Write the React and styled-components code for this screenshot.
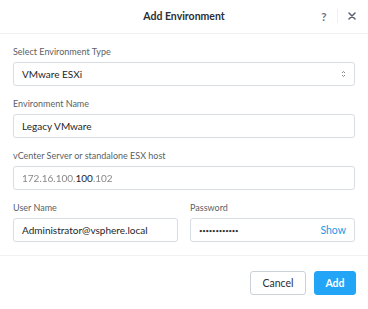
import React from "react";
import styled, { createGlobalStyle } from "styled-components";

const Global = createGlobalStyle`
  html, body { margin: 0; padding: 0; background: #fff; }
  body { font-family: Lato, "Noto Sans", sans-serif; color: #333; }
  * { box-sizing: border-box; }
`;

const Dialog = styled.div`
  width: 368px;
  height: 309px;
  background: #fff;
  display: flex;
  flex-direction: column;
`;

const Header = styled.div`
  height: 34px;
  border-bottom: 1px solid #f0f1f3;
  position: relative;
  display: flex;
  align-items: center;
  justify-content: center;
`;

const Title = styled.div`
  font-size: 10.5px;
  font-weight: 700;
  color: #2b2e33;
  margin-top: -2px;
`;

const HeaderActions = styled.div`
  position: absolute;
  right: 12px;
  top: 0;
  height: 32px;
  display: flex;
  align-items: center;
`;

const Help = styled.span`
  font-size: 11.5px;
  font-weight: 700;
  color: #6a7280;
  width: 10px;
  text-align: center;
`;

const Divider = styled.span`
  width: 1px;
  height: 14px;
  background: #eef0f3;
  margin: 0 10px 0 8px;
`;

const Body = styled.div`
  padding: 12px 13px 13px 13px;
  display: flex;
  flex-direction: column;
  gap: 12px;
  border-bottom: 1px solid #f0f1f3;
`;

const Field = styled.div`
  display: flex;
  flex-direction: column;
`;

const Label = styled.label`
  font-size: 9px;
  line-height: 12px;
  color: #5c5f66;
  margin-bottom: 4px;
`;

const Box = styled.div`
  height: 24px;
  border: 1px solid #d8dce3;
  border-radius: 3px;
  display: flex;
  align-items: center;
  padding: 0 8px;
  font-size: 10px;
  color: #22252a;
  background: #fff;
`;

const Value = styled.span`
  flex: 1;
  white-space: nowrap;
`;

const Blur = styled.span`
  filter: blur(0.6px);
  color: #888;
`;

const Dots = styled.span`
  flex: 1;
  font-size: 6px;
  letter-spacing: -0.2px;
  color: #333;
`;

const Show = styled.span`
  color: #1b9be6;
  font-size: 10.5px;
`;

const Row = styled.div`
  display: grid;
  grid-template-columns: 1fr 1fr;
  gap: 12px;
`;

const Footer = styled.div`
  flex: 1;
  display: flex;
  justify-content: flex-end;
  align-items: flex-start;
  padding: 15px 12px 0 0;
  gap: 8px;
`;

const Button = styled.button`
  height: 24px;
  width: ${(p) => p.$w}px;
  padding: 0;
  border-radius: 3px;
  font-family: Lato, "Noto Sans", sans-serif;
  font-size: 10.5px;
  font-weight: ${(p) => (p.$primary ? 700 : 400)};
  background: ${(p) => (p.$primary ? "#22a5f7" : "#fff")};
  color: ${(p) => (p.$primary ? "#fff" : "#2b2e33")};
  border: 1px solid ${(p) => (p.$primary ? "#22a5f7" : "#ccd1d9")};
`;

const Chevrons = () => (
  <svg width="5" height="8" viewBox="0 0 5 8">
    <path d="M1 3 L2.5 1.5 L4 3" fill="none" stroke="#777" strokeWidth="0.9" />
    <path d="M1 5 L2.5 6.5 L4 5" fill="none" stroke="#777" strokeWidth="0.9" />
  </svg>
);

const CloseIcon = () => (
  <svg width="8" height="8" viewBox="0 0 8 8">
    <path d="M1 1 L7 7 M7 1 L1 7" stroke="#5a6270" strokeWidth="1.5" strokeLinecap="round" />
  </svg>
);

export default function App() {
  return (
    <>
      <Global />
      <Dialog>
        <Header>
          <Title>Add Environment</Title>
          <HeaderActions>
            <Help>?</Help>
            <Divider />
            <CloseIcon />
          </HeaderActions>
        </Header>
        <Body>
          <Field>
            <Label>Select Environment Type</Label>
            <Box>
              <Value>VMware ESXi</Value>
              <Chevrons />
            </Box>
          </Field>
          <Field>
            <Label>Environment Name</Label>
            <Box>
              <Value>Legacy VMware</Value>
            </Box>
          </Field>
          <Field>
            <Label>vCenter Server or standalone ESX host</Label>
            <Box>
              <Value>
                <Blur>172.16.100.</Blur>100<Blur>.102</Blur>
              </Value>
            </Box>
          </Field>
          <Row>
            <Field>
              <Label>User Name</Label>
              <Box>
                <Value>Administrator@vsphere.local</Value>
              </Box>
            </Field>
            <Field>
              <Label>Password</Label>
              <Box>
                <Dots>••••••••••••</Dots>
                <Show>Show</Show>
              </Box>
            </Field>
          </Row>
        </Body>
        <Footer>
          <Button $w={56}>Cancel</Button>
          <Button $primary $w={42}>Add</Button>
        </Footer>
      </Dialog>
    </>
  );
}
